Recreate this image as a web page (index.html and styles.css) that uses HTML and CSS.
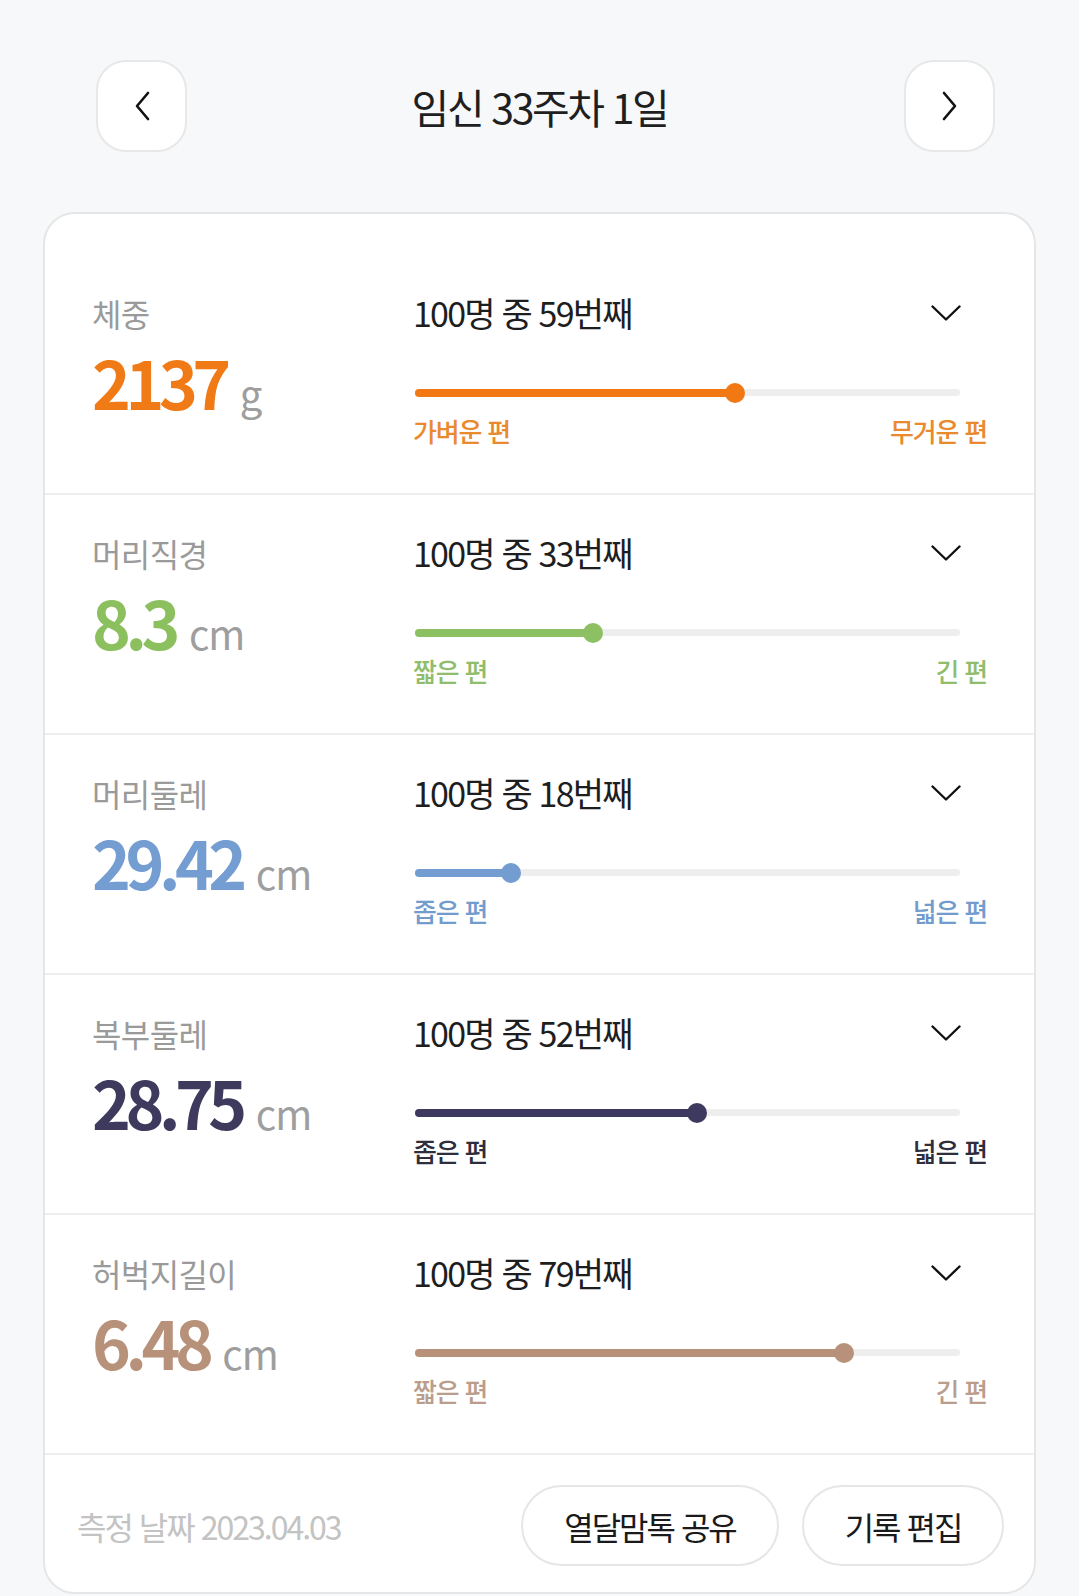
FILE: index.html
```html
<!DOCTYPE html>
<html lang="ko">
<head>
<meta charset="utf-8">
<title>임신 33주차 1일</title>
<link rel="stylesheet" href="styles.css">
</head>
<body>
<div class="page">
  <header class="header">
    <button class="nav-btn" aria-label="이전">
      <svg width="20" height="30" viewBox="0 0 20 30"><path d="M16 2 L5 15 L16 28" fill="none" stroke="#111" stroke-width="2.6" stroke-linecap="round" stroke-linejoin="round"/></svg>
    </button>
    <h1 class="title">임신 33주차 1일</h1>
    <button class="nav-btn" aria-label="다음">
      <svg width="20" height="30" viewBox="0 0 20 30"><path d="M4 2 L15 15 L4 28" fill="none" stroke="#111" stroke-width="2.6" stroke-linecap="round" stroke-linejoin="round"/></svg>
    </button>
  </header>

  <section class="card">
    <div class="row row-first c-orange">
      <div class="left">
        <div class="label">체중</div>
        <div class="value"><span class="num">2137</span><span class="unit">g</span></div>
      </div>
      <div class="right">
        <div class="rank-line">
          <span class="rank">100명 중 59번째</span>
          <svg class="chev" width="30" height="16" viewBox="0 0 30 16"><path d="M1.5 1.5 L15 14.5 L28.5 1.5" fill="none" stroke="#111" stroke-width="2.4" stroke-linecap="round" stroke-linejoin="round"/></svg>
        </div>
        <div class="track"><div class="fill" style="width:58.7%"></div><div class="dot" style="left:58.7%"></div></div>
        <div class="ends"><span>가벼운 편</span><span>무거운 편</span></div>
      </div>
    </div>

    <div class="row c-green">
      <div class="left">
        <div class="label">머리직경</div>
        <div class="value"><span class="num">8.3</span><span class="unit">cm</span></div>
      </div>
      <div class="right">
        <div class="rank-line">
          <span class="rank">100명 중 33번째</span>
          <svg class="chev" width="30" height="16" viewBox="0 0 30 16"><path d="M1.5 1.5 L15 14.5 L28.5 1.5" fill="none" stroke="#111" stroke-width="2.4" stroke-linecap="round" stroke-linejoin="round"/></svg>
        </div>
        <div class="track"><div class="fill" style="width:32.6%"></div><div class="dot" style="left:32.6%"></div></div>
        <div class="ends"><span>짧은 편</span><span>긴 편</span></div>
      </div>
    </div>

    <div class="row c-blue">
      <div class="left">
        <div class="label">머리둘레</div>
        <div class="value"><span class="num">29.42</span><span class="unit">cm</span></div>
      </div>
      <div class="right">
        <div class="rank-line">
          <span class="rank">100명 중 18번째</span>
          <svg class="chev" width="30" height="16" viewBox="0 0 30 16"><path d="M1.5 1.5 L15 14.5 L28.5 1.5" fill="none" stroke="#111" stroke-width="2.4" stroke-linecap="round" stroke-linejoin="round"/></svg>
        </div>
        <div class="track"><div class="fill" style="width:17.6%"></div><div class="dot" style="left:17.6%"></div></div>
        <div class="ends"><span>좁은 편</span><span>넓은 편</span></div>
      </div>
    </div>

    <div class="row c-navy">
      <div class="left">
        <div class="label">복부둘레</div>
        <div class="value"><span class="num">28.75</span><span class="unit">cm</span></div>
      </div>
      <div class="right">
        <div class="rank-line">
          <span class="rank">100명 중 52번째</span>
          <svg class="chev" width="30" height="16" viewBox="0 0 30 16"><path d="M1.5 1.5 L15 14.5 L28.5 1.5" fill="none" stroke="#111" stroke-width="2.4" stroke-linecap="round" stroke-linejoin="round"/></svg>
        </div>
        <div class="track"><div class="fill" style="width:51.7%"></div><div class="dot" style="left:51.7%"></div></div>
        <div class="ends"><span>좁은 편</span><span>넓은 편</span></div>
      </div>
    </div>

    <div class="row c-tan">
      <div class="left">
        <div class="label">허벅지길이</div>
        <div class="value"><span class="num">6.48</span><span class="unit">cm</span></div>
      </div>
      <div class="right">
        <div class="rank-line">
          <span class="rank">100명 중 79번째</span>
          <svg class="chev" width="30" height="16" viewBox="0 0 30 16"><path d="M1.5 1.5 L15 14.5 L28.5 1.5" fill="none" stroke="#111" stroke-width="2.4" stroke-linecap="round" stroke-linejoin="round"/></svg>
        </div>
        <div class="track"><div class="fill" style="width:78.7%"></div><div class="dot" style="left:78.7%"></div></div>
        <div class="ends"><span>짧은 편</span><span>긴 편</span></div>
      </div>
    </div>

    <div class="footer">
      <span class="date">측정 날짜 2023.04.03</span>
      <div class="actions">
        <button class="pill pill-share">열달맘톡 공유</button>
        <button class="pill pill-edit">기록 편집</button>
      </div>
    </div>
  </section>
</div>
</body>
</html>
```

FILE: styles.css
```css
html, body {
  margin: 0;
  padding: 0;
  overflow: hidden;
  background: #f7f8f9;
}
body {
  font-family: "Noto Sans CJK KR", "Noto Sans", sans-serif;
  color: #222;
}
.page {
  width: 1079px;
  height: 1596px;
}
.header {
  display: grid;
  grid-template-columns: 91px 1fr 91px;
  align-items: center;
  padding: 60px 84px 0 96px;
  height: 92px;
}
.nav-btn {
  width: 91px;
  height: 92px;
  border: 2px solid #e8e8e8;
  border-radius: 30px;
  background: #fff;
  display: flex;
  align-items: center;
  justify-content: center;
  padding: 0;
}
.title {
  margin: 0 12px 0 0;
  text-align: center;
  font-size: 41px;
  font-weight: 400;
  letter-spacing: -2.4px;
  color: #1f1f1f;
  line-height: 50px;
}
.card {
  margin: 60px 43px 0 43px;
  background: #fff;
  border: 2px solid #e6e6e6;
  border-radius: 32px;
}
.row {
  display: grid;
  grid-template-columns: 321px 1fr;
  padding: 38px 47px 47px 47px;
  border-bottom: 2px solid #eeeeee;
}
.row-first {
  padding-top: 79px;
}
.label {
  font-size: 32px;
  line-height: 40px;
  color: #9a9a9a;
  letter-spacing: -0.6px;
}
.value {
  margin-top: 13px;
  line-height: 70px;
  white-space: nowrap;
}
.num {
  font-size: 66px;
  font-weight: 700;
  letter-spacing: -5.5px;
}
.unit {
  font-size: 40px;
  color: #9e9e9e;
  margin-left: 14px;
  letter-spacing: -1px;
}
.right {
  display: flex;
  flex-direction: column;
}
.rank-line {
  display: flex;
  justify-content: space-between;
  align-items: center;
  height: 40px;
  padding-right: 27px;
}
.rank {
  font-size: 34px;
  line-height: 40px;
  letter-spacing: -1.8px;
  color: #1e1e1e;
}
.chev {
  display: block;
  margin-right: -1px;
}
.track {
  position: relative;
  margin: 56px 27px 0 2px;
  height: 7px;
  border-radius: 4px;
  background: #eeeeee;
}
.fill {
  position: absolute;
  left: 0;
  top: 0;
  height: 8px;
  margin-top: -0.5px;
  border-radius: 4px;
}
.dot {
  position: absolute;
  top: 50%;
  width: 20px;
  height: 20px;
  margin: -10px 0 0 -10px;
  border-radius: 50%;
}
.ends {
  display: flex;
  justify-content: space-between;
  margin-top: 20px;
  font-size: 26px;
  line-height: 30px;
  font-weight: 500;
  letter-spacing: -1.2px;
}

.c-orange .num { color: #f07a16; }
.c-orange .ends { color: #e98a2e; }
.c-orange .fill, .c-orange .dot { background: #f27814; }

.c-green .num { color: #8cc05f; }
.c-green .ends { color: #90bd6c; }
.c-green .fill, .c-green .dot { background: #8dc063; }

.c-blue .num { color: #749dd1; }
.c-blue .ends { color: #729ccd; }
.c-blue .fill, .c-blue .dot { background: #739cd0; }

.c-navy .num { color: #3d3a5e; }
.c-navy .ends { color: #2e2e3c; }
.c-navy .fill, .c-navy .dot { background: #3e3a5f; }

.c-tan .num { color: #b8917b; }
.c-tan .ends { color: #ba9d8c; }
.c-tan .fill, .c-tan .dot { background: #b8917a; }

.footer {
  display: flex;
  align-items: center;
  justify-content: space-between;
  padding: 30px 30px 26px 32px;
}
.date {
  font-size: 32px;
  color: #c3c3c3;
  letter-spacing: -2px;
}
.actions {
  display: flex;
  gap: 23px;
}
.pill {
  height: 81px;
  border: 2px solid #e6e6e6;
  border-radius: 41px;
  background: #fff;
  font-family: "Noto Sans CJK KR", "Noto Sans", sans-serif;
  font-size: 32px;
  letter-spacing: -2px;
  color: #1a1a1a;
  padding: 0;
}
.pill-share { width: 258px; }
.pill-edit { width: 202px; }
```
